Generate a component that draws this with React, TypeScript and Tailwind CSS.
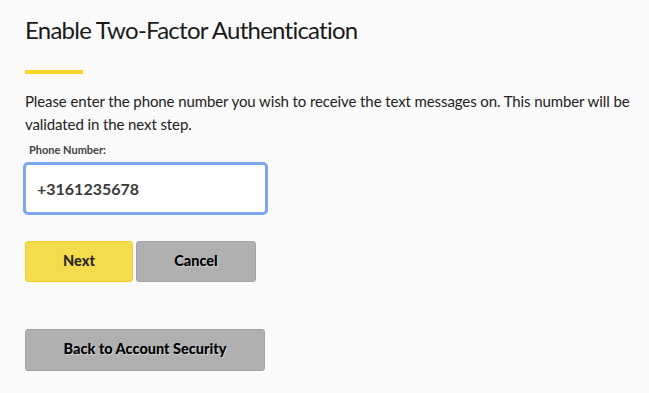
import { useState } from "react";

const font = { fontFamily: "Lato, 'Noto Sans', sans-serif" };

const App = () => {
  const [phone, setPhone] = useState("+3161235678");

  return (
    <div className="min-h-screen w-full bg-[#fafafa] text-[#1f1f1f]" style={font}>
      <div className="pl-[25px] pt-[15px]">
        {/* Heading */}
        <h1 className="text-[24px] leading-[30px] font-normal tracking-[-0.75px] text-[#1a1a1a]">
          Enable Two-Factor Authentication
        </h1>
        <div className="mt-[25px] h-[4px] w-[58px] bg-[#f5d626]" />

        {/* Intro */}
        <p className="mt-[16px] w-[618px] text-[15px] leading-[23px] tracking-[-0.1px] text-[#222]">
          Please enter the phone number you wish to receive the text messages on. This number will be
          validated in the next step.
        </p>

        {/* Phone input */}
        <label className="mt-[7px] ml-[4px] block text-[11px] leading-[14px] font-bold text-[#444]">
          Phone Number:
        </label>
        <input
          value={phone}
          onChange={(e) => setPhone(e.target.value)}
          className="mt-[5px] -ml-[2px] block h-[53px] w-[245px] rounded-[5px] border-[3px] border-[#7aa7f0] bg-white px-[11px] text-[16px] font-bold text-[#3a3a3a] outline-none"
        />

        {/* Actions */}
        <div className="mt-[26px] flex gap-[3px]">
          <button className="h-[41px] w-[108px] rounded-[3px] border border-[#f0cf2a] bg-[#f5dc4c] pb-[2px] text-[14.5px] font-black text-[#2a2a2a]">
            Next
          </button>
          <button className="h-[41px] w-[120px] rounded-[3px] border border-[#a3a3a3] bg-[#b0b0b0] pb-[2px] text-[14.5px] font-black text-black [text-shadow:1px_1px_1px_rgba(255,255,255,0.45)]">
            Cancel
          </button>
        </div>

        <button className="mt-[47px] block h-[42px] w-[240px] rounded-[3px] border border-[#a3a3a3] bg-[#b0b0b0] pb-[2px] text-[14.5px] font-black text-black [text-shadow:1px_1px_1px_rgba(255,255,255,0.45)]">
          Back to Account Security
        </button>
      </div>
    </div>
  );
};

export default App;
